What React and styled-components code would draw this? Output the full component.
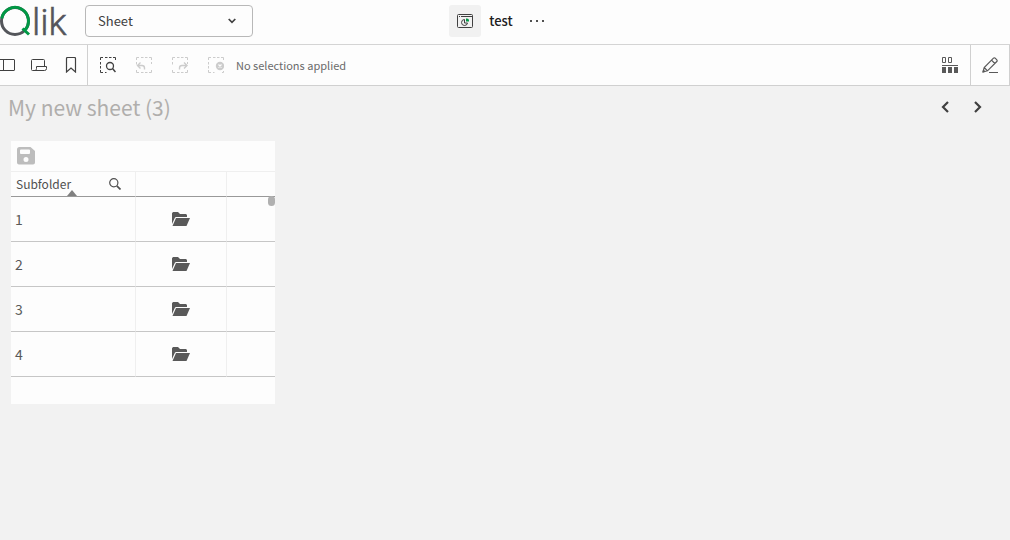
import styled, { createGlobalStyle } from "styled-components";

const folders = ["1", "2", "3", "4"];

export default function App() {
  return (
    <>
      <GlobalStyle />
      <Page>
        <TopBar>
          <TopLeft>
            <Logo />
            <SheetPicker>
              <select aria-label="Content" defaultValue="sheet">
                <option value="sheet">Sheet</option>
              </select>
              <Chevron />
            </SheetPicker>
          </TopLeft>
          <AppTitle>
            <AppButton type="button" aria-label="App overview">
              <AppIcon />
            </AppButton>
            <h1>test</h1>
            <IconButton type="button" aria-label="More">
              <DotsIcon />
            </IconButton>
          </AppTitle>
        </TopBar>

        <Toolbar>
          <PanelGroup>
            <IconButton type="button" aria-label="Assets panel">
              <AssetsIcon />
            </IconButton>
            <IconButton type="button" aria-label="Notes">
              <NotesIcon />
            </IconButton>
            <IconButton type="button" aria-label="Bookmarks">
              <BookmarkIcon />
            </IconButton>
          </PanelGroup>
          <SelectionGroup>
            <IconButton type="button" aria-label="Smart search">
              <SmartSearchIcon />
            </IconButton>
            <IconButton type="button" aria-label="Step back" disabled>
              <StepBackIcon />
            </IconButton>
            <IconButton type="button" aria-label="Step forward" disabled>
              <StepForwardIcon />
            </IconButton>
            <IconButton type="button" aria-label="Clear all selections" disabled>
              <ClearIcon />
            </IconButton>
            <p>No selections applied</p>
          </SelectionGroup>
          <SheetsGroup>
            <IconButton type="button" aria-label="Selections tool">
              <SelectionsIcon />
            </IconButton>
          </SheetsGroup>
          <EditGroup>
            <IconButton type="button" aria-label="Edit sheet">
              <PencilIcon />
            </IconButton>
          </EditGroup>
        </Toolbar>

        <SheetHeader>
          <h2>My new sheet (3)</h2>
          <nav>
            <IconButton type="button" aria-label="Previous sheet">
              <Arrow d="M7 1 2 6l5 5" />
            </IconButton>
            <IconButton type="button" aria-label="Next sheet">
              <Arrow d="m2 1 5 5-5 5" />
            </IconButton>
          </nav>
        </SheetHeader>

        <Card>
          <CardTools>
            <ToolButton type="button" aria-label="Save" disabled>
              <SaveIcon />
            </ToolButton>
          </CardTools>
          <TableArea>
            <Table>
              <colgroup>
                <col className="name" />
                <col className="open" />
                <col />
              </colgroup>
              <thead>
                <tr>
                  <th scope="col" aria-sort="ascending">
                    <HeadCell>
                      <span>Subfolder</span>
                      <ToolButton type="button" aria-label="Search Subfolder">
                        <SearchIcon />
                      </ToolButton>
                      <SortMark viewBox="0 0 10 6" />
                    </HeadCell>
                  </th>
                  <th />
                  <th />
                </tr>
              </thead>
              <tbody>
                {folders.map((folder) => (
                  <tr key={folder}>
                    <td>{folder}</td>
                    <td>
                      <OpenButton type="button" aria-label={`Open ${folder}`}>
                        <FolderIcon />
                      </OpenButton>
                    </td>
                    <td />
                  </tr>
                ))}
              </tbody>
            </Table>
            <ScrollThumb />
          </TableArea>
        </Card>
      </Page>
    </>
  );
}

const GlobalStyle = createGlobalStyle`
  * {
    box-sizing: border-box;
  }
  body {
    margin: 0;
    background: #f2f2f2;
    color: #404040;
    font-family: "Noto Sans CJK SC", "Open Sans", sans-serif;
  }
  h1, h2, p {
    margin: 0;
  }
  button, select {
    font: inherit;
    color: inherit;
  }
  svg {
    display: block;
    flex-shrink: 0;
  }
`;

const Page = styled.div`
  min-height: 100vh;
`;

const TopBar = styled.header`
  display: grid;
  grid-template-columns: 1fr auto 1fr;
  align-items: center;
  height: 45px;
  padding-bottom: 2px;
  background: #fdfdfd;
  border-bottom: 1px solid #d4d4d4;
`;

const TopLeft = styled.div`
  display: flex;
  align-items: center;
  gap: 13px;
`;

const LogoSvg = styled.svg`
  overflow: visible;
  text {
    font-family: Roboto, sans-serif;
    font-size: 37px;
    font-weight: 300;
  }
`;

const SheetPicker = styled.div`
  position: relative;
  width: 168px;
  select {
    appearance: none;
    display: block;
    width: 100%;
    height: 32px;
    padding: 0 32px 0 12px;
    border: 1px solid #b8b8b8;
    border-radius: 4px;
    background: #fdfdfd;
    font-size: 13px;
    line-height: 20px;
  }
  svg {
    position: absolute;
    top: 13px;
    right: 17px;
    pointer-events: none;
  }
`;

const AppTitle = styled.div`
  display: flex;
  align-items: center;
  gap: 8px;
  padding-right: 8px;
  h1 {
    color: #202020;
    font-size: 13px;
    font-weight: 500;
    line-height: 20px;
  }
`;

const IconButton = styled.button`
  display: flex;
  flex-shrink: 0;
  align-items: center;
  justify-content: center;
  width: 32px;
  height: 32px;
  padding: 0;
  border: 0;
  border-radius: 3px;
  background: none;
  color: #404040;
  &:disabled {
    color: #cccccc;
  }
`;

const AppButton = styled(IconButton)`
  background: #f1f1f1;
`;

const Toolbar = styled.div`
  display: flex;
  height: 41px;
  background: #fdfdfd;
  border-bottom: 1px solid #d0d0d0;
`;

const PanelGroup = styled.div`
  display: flex;
  align-items: center;
  justify-content: flex-end;
  width: 88px;
  overflow: hidden;
  border-right: 1px solid #d0d0d0;
`;

const SelectionGroup = styled.div`
  display: flex;
  flex: 1;
  align-items: center;
  gap: 4px;
  padding-left: 4px;
  p {
    color: #6a6a6a;
    font-size: 11px;
    line-height: 20px;
  }
`;

const SheetsGroup = styled.div`
  display: flex;
  align-items: center;
  padding: 0 4px;
`;

const EditGroup = styled.div`
  display: flex;
  align-items: center;
  padding: 0 3px;
  border: solid #d0d0d0;
  border-width: 0 1px;
`;

const SheetHeader = styled.div`
  display: flex;
  align-items: center;
  justify-content: space-between;
  height: 41px;
  padding: 0 17px 0 8px;
  h2 {
    color: #b0aeac;
    font-size: 21px;
    font-weight: 400;
    line-height: 32px;
  }
  nav {
    display: flex;
  }
`;

const Card = styled.section`
  width: 264px;
  max-width: calc(100% - 22px);
  margin: 14px 11px;
  padding-bottom: 27px;
  background: #fdfdfd;
`;

const CardTools = styled.div`
  display: flex;
  align-items: center;
  height: 30px;
  padding: 0 6px;
`;

const ToolButton = styled.button`
  padding: 0;
  border: 0;
  background: none;
  color: #505050;
  &:disabled {
    color: #bdbdbd;
  }
`;

const TableArea = styled.div`
  position: relative;
`;

const Table = styled.table`
  width: 100%;
  table-layout: fixed;
  border-collapse: separate;
  border-spacing: 0;
  .name {
    width: 125px;
  }
  .open {
    width: 91px;
  }
  th,
  td {
    padding: 0;
    border-right: 1px solid #efefef;
    &:last-child {
      border-right: 0;
    }
  }
  th {
    height: 26px;
    border-top: 1px solid #efefef;
    border-bottom: 1px solid #999;
    color: #505050;
    font-size: 12px;
    font-weight: 400;
    line-height: 20px;
    text-align: left;
  }
  td {
    height: 45px;
    padding-left: 4px;
    border-bottom: 1px solid #c6c6c6;
    color: #595959;
    font-size: 14px;
    line-height: 20px;
  }
`;

const HeadCell = styled.div`
  position: relative;
  display: flex;
  align-items: center;
  justify-content: space-between;
  height: 24px;
  padding: 0 14px 0 5px;
`;

const SortMark = styled((props) => (
  <svg {...props}>
    <path d="M5 0l5 6H0z" fill="#808080" />
  </svg>
))`
  position: absolute;
  bottom: 0;
  left: 56px;
  width: 10px;
  height: 6px;
`;

const OpenButton = styled(ToolButton)`
  display: flex;
  align-items: center;
  justify-content: center;
  width: 100%;
  height: 24px;
  padding-right: 4px;
  color: #595959;
`;

const ScrollThumb = styled.div`
  position: absolute;
  top: 25px;
  right: 0;
  width: 7px;
  height: 10px;
  border-radius: 4px;
  background: #b0b0b0;
`;

function Logo() {
  return (
    <LogoSvg width="72" height="42" viewBox="0 0 72 42" role="img" aria-label="Qlik">
      <g fill="none" strokeWidth="3">
        <circle cx="15" cy="21" r="13.5" stroke="#54565b" />
        <path d="M1.700 18.500A13.500 13.500 0 1 1 24.500 30.500M22.500 28.500l6.500 6" stroke="#009845" />
      </g>
      <text x="32" y="35" fill="#54565b" stroke="#54565b" strokeWidth=".5">
        lik
      </text>
    </LogoSvg>
  );
}

function Chevron() {
  return (
    <svg width="8" height="6" viewBox="0 0 8 6" fill="none">
      <path d="M.7 1 4 4.300 7.300 1" stroke="#404040" strokeWidth="1.700" />
    </svg>
  );
}

function AppIcon() {
  return (
    <svg width="16" height="16" viewBox="0 0 16 16" fill="none" stroke="#404040">
      <rect x=".5" y="1.500" width="15" height="13" rx="1" />
      <path d="M2 3.500h1M4 3.500h11" />
      <path d="M7.500 6.500a3 3 0 1 0 3 3.500h-3z" />
      <path d="M9 5.500h1A2 2 0 0 1 12 7.500v1H9z" fill="#009845" stroke="none" />
    </svg>
  );
}

function DotsIcon() {
  return (
    <svg width="16" height="4" viewBox="0 0 16 4" fill="#505050">
      <path d="M1 1h2v2H1zM7 1h2v2H7zM13 1h2v2h-2z" />
    </svg>
  );
}

function AssetsIcon() {
  return (
    <svg width="16" height="16" viewBox="0 0 16 16" fill="none" stroke="currentColor">
      <rect x=".5" y="2.500" width="15" height="11" rx=".5" />
      <path d="M4.500 2.500v11" />
    </svg>
  );
}

function NotesIcon() {
  return (
    <svg width="16" height="16" viewBox="0 0 16 16" fill="none" stroke="currentColor">
      <path d="M4 13.500H1.500a1 1 0 0 1-1-1v-9a1 1 0 0 1 1-1h11a1 1 0 0 1 1 1v6" />
      <path d="M5.500 9.500h10v2a2 2 0 0 1-2 2h-10c1.500 0 2-.8 2-2z" />
    </svg>
  );
}

function BookmarkIcon() {
  return (
    <svg width="16" height="16" viewBox="0 0 16 16" fill="none" stroke="currentColor">
      <path d="M3.500 15V1.500a1 1 0 0 1 1-1h7a1 1 0 0 1 1 1V15L8 11z" strokeWidth="1.200" />
    </svg>
  );
}

// Dashed frame shared by the selection buttons
function Frame({ open }) {
  return (
    <path
      d={
        open
          ? "M.5 3V.5H3M5 .5h2.500M9 .5h2.500M13 .5h2.500V3M.5 5v2.500M.5 9v2.500M.5 13v2.500H3M5 15.500h1.500"
          : "M.5 3V.5H3M5 .5h2.500M9 .5h2.500M13 .5h2.500V3M.5 5v2.500M.5 13v2.500H3M5 15.500h2.500M9 15.500h2.500M13 15.500h2.500V13M15.500 5v2"
      }
    />
  );
}

function SmartSearchIcon() {
  return (
    <svg width="16" height="16" viewBox="0 0 16 16" fill="none" stroke="currentColor">
      <Frame open />
      <circle cx="10" cy="9" r="3.500" strokeWidth="1.300" />
      <path d="m12.500 11.500 3 3.500" strokeWidth="1.500" />
    </svg>
  );
}

function StepBackIcon() {
  return (
    <svg width="16" height="16" viewBox="0 0 16 16" fill="none" stroke="currentColor">
      <Frame />
      <path d="M4.500 5.500 1.500 8.500l3 3M2 8.500h4a2.500 2.500 0 0 1 2.500 2.500V12.500" strokeWidth="1.400" />
    </svg>
  );
}

function StepForwardIcon() {
  return (
    <svg width="16" height="16" viewBox="0 0 16 16" fill="none" stroke="currentColor">
      <Frame />
      <path d="m12 5.500 3 3-3 3M14.500 8.500H10A2.500 2.500 0 0 0 7.500 11V12.500" strokeWidth="1.400" />
    </svg>
  );
}

function ClearIcon() {
  return (
    <svg width="16" height="16" viewBox="0 0 16 16" fill="none" stroke="currentColor">
      <Frame open />
      <path d="M15.500 14v1.500H14" />
      <circle cx="12" cy="9" r="4.200" fill="currentColor" stroke="none" />
      <path d="m10.500 7.500 3 3m0-3-3 3" stroke="#fdfdfd" strokeWidth="1.200" />
    </svg>
  );
}

function SelectionsIcon() {
  return (
    <svg width="16" height="16" viewBox="0 0 16 16" fill="#595959">
      <path d="M.5.5h3v5h-3zM6.500.5h3v5h-3z" fill="none" stroke="#595959" />
      <path d="M0 8h16v1H0zM0 10h4v6H0zM6 10h4v6H6zM12 10h4v6h-4z" />
    </svg>
  );
}

function PencilIcon() {
  return (
    <svg width="16" height="16" viewBox="0 0 16 16" fill="none" stroke="#595959">
      <path d="M1 15l1.200-4.500L11.500 1.200a1.200 1.200 0 0 1 1.700 0l1.600 1.600a1.200 1.200 0 0 1 0 1.700L5.500 13.800zM9.500 3.200l3.300 3.300M2.200 10.500l3.300 3.300" strokeWidth="1.200" />
      <path d="M1 15l.5-2 1.500 1.500z" fill="#595959" />
      <path d="M7 15.500h9" />
    </svg>
  );
}

function Arrow({ d }) {
  return (
    <svg width="9" height="12" viewBox="0 0 9 12" fill="none">
      <path d={d} stroke="#404040" strokeWidth="2.200" />
    </svg>
  );
}

function SaveIcon() {
  return (
    <svg width="18" height="18" viewBox="0 0 18 18" fill="currentColor">
      <path
        fillRule="evenodd"
        d="M2.500 0H13.500L18 4v11.500a2 2 0 0 1-2 2H2a2 2 0 0 1-2-2V2.500A2.500 2.500 0 0 1 2.500 0zM4 2.500a1 1 0 0 0-1 1v2.500a1 1 0 0 0 1 1h8a1 1 0 0 0 1-1V3.500a1 1 0 0 0-1-1zm5 7.500a2.500 2.500 0 1 0 0 5 2.500 2.500 0 0 0 0-5z"
      />
    </svg>
  );
}

function SearchIcon() {
  return (
    <svg width="12" height="12" viewBox="0 0 12 12" fill="none" stroke="currentColor">
      <circle cx="4.800" cy="4.800" r="4.100" strokeWidth="1.200" />
      <path d="m7.800 7.800 3.700 3.700" strokeWidth="1.700" />
    </svg>
  );
}

function FolderIcon() {
  return (
    <svg width="18" height="14" viewBox="0 0 18 14" fill="currentColor">
      <path d="M0 12V1.200L1 0h5l2 2h6l1 1v2H4L3 5.500z" />
      <path d="M4 6h14l-3.500 8H.5z" />
    </svg>
  );
}
